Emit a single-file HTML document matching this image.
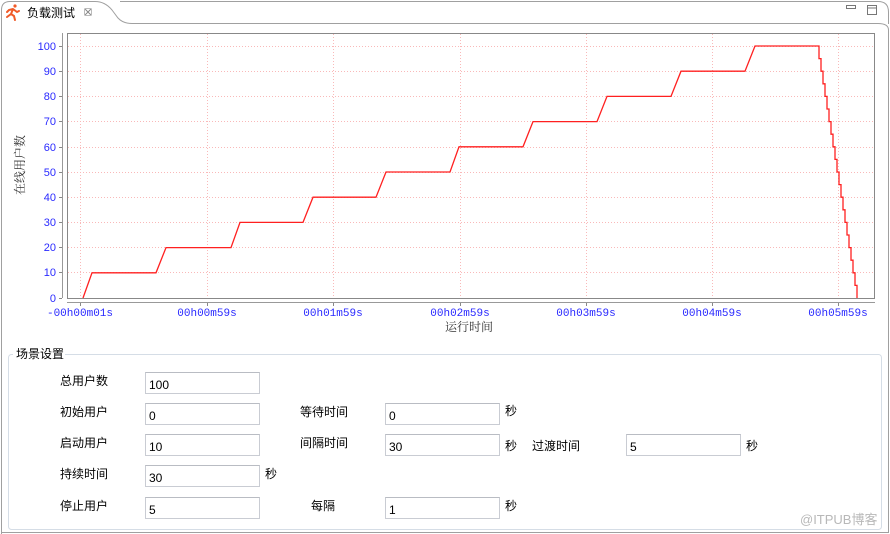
<!DOCTYPE html>
<html><head><meta charset="utf-8">
<style>
*{margin:0;padding:0;box-sizing:border-box}
body{width:890px;height:534px;background:#fff;position:relative;overflow:hidden;font-family:"Liberation Sans","Noto Sans CJK SC",sans-serif;font-size:12px;color:#000}
.abs{position:absolute}
.lbl{position:absolute;font-size:12px;line-height:14px}
.inp{position:absolute;width:115px;height:22px;border:1px solid #c9ccd3;border-top-color:#b9bcc3;background:#fff;font-size:12px;padding:5px 0 0 3px;line-height:14px}
</style></head><body>
<svg class="abs" style="left:0;top:0" width="890" height="534">
  <path d="M1.5,534 V10 Q1.5,1.5 10,1.5 H95 Q105,1.5 112,10 L118,18 Q123,23.5 132,23.5 H878 Q888.5,23.5 888.5,30 V532.5 H1.5" fill="none" stroke="#a0a0a0"/>
  <path d="M120,1.5 H878 Q888.5,1.5 888.5,12 V24" fill="none" stroke="#a0a0a0"/>
  <rect x="846.5" y="5.5" width="9" height="3" fill="#fff" stroke="#777"/>
  <rect x="867.5" y="5.5" width="9" height="9" fill="#fff" stroke="#777"/>
  <line x1="868" y1="8" x2="876" y2="8" stroke="#777"/>
  <g stroke="#f05a28" stroke-width="2" fill="none" stroke-linecap="round">
    <circle cx="15" cy="6" r="1.6" fill="#f05a28" stroke="none"/>
    <path d="M13,9 L11,14 L7,17 M11,14 L14,16 L15,20 M13,9 L17,12 L19,11 M13,9 L9,10 L7,12"/>
  </g>
  <g stroke="#888" stroke-width="1" fill="none">
    <path d="M85,9 L91,15 M91,9 L85,15"/>
    <rect x="84.5" y="8.5" width="7" height="7" rx="1" stroke="#bbb"/>
  </g>
  <line x1="62.5" y1="33" x2="62.5" y2="298" stroke="#999"/>
  <rect x="67.5" y="33.5" width="807" height="265" fill="#fff" stroke="#888"/>
  <line x1="67" y1="302.5" x2="875" y2="302.5" stroke="#999"/>
  <g stroke="#f9b9b9" stroke-width="1" stroke-dasharray="1,2">
    <line x1="68" y1="46.5" x2="874" y2="46.5"/><line x1="68" y1="71.5" x2="874" y2="71.5"/>
    <line x1="68" y1="96.5" x2="874" y2="96.5"/><line x1="68" y1="121.5" x2="874" y2="121.5"/>
    <line x1="68" y1="147.5" x2="874" y2="147.5"/><line x1="68" y1="172.5" x2="874" y2="172.5"/>
    <line x1="68" y1="197.5" x2="874" y2="197.5"/><line x1="68" y1="222.5" x2="874" y2="222.5"/>
    <line x1="68" y1="247.5" x2="874" y2="247.5"/><line x1="68" y1="272.5" x2="874" y2="272.5"/>
    <line x1="80.5" y1="34" x2="80.5" y2="298"/><line x1="207.5" y1="34" x2="207.5" y2="298"/>
    <line x1="333.5" y1="34" x2="333.5" y2="298"/><line x1="460.5" y1="34" x2="460.5" y2="298"/>
    <line x1="586.5" y1="34" x2="586.5" y2="298"/><line x1="712.5" y1="34" x2="712.5" y2="298"/>
    <line x1="838.5" y1="34" x2="838.5" y2="298"/>
  </g>
  <g stroke="#888">
    <line x1="59" y1="46.5" x2="62" y2="46.5"/><line x1="59" y1="71.5" x2="62" y2="71.5"/><line x1="59" y1="96.5" x2="62" y2="96.5"/>
    <line x1="59" y1="121.5" x2="62" y2="121.5"/><line x1="59" y1="147.5" x2="62" y2="147.5"/><line x1="59" y1="172.5" x2="62" y2="172.5"/>
    <line x1="59" y1="197.5" x2="62" y2="197.5"/><line x1="59" y1="222.5" x2="62" y2="222.5"/><line x1="59" y1="247.5" x2="62" y2="247.5"/>
    <line x1="59" y1="272.5" x2="62" y2="272.5"/><line x1="59" y1="298.5" x2="62" y2="298.5"/>
    <line x1="80.5" y1="303" x2="80.5" y2="306"/><line x1="207.5" y1="303" x2="207.5" y2="306"/><line x1="333.5" y1="303" x2="333.5" y2="306"/>
    <line x1="460.5" y1="303" x2="460.5" y2="306"/><line x1="586.5" y1="303" x2="586.5" y2="306"/><line x1="712.5" y1="303" x2="712.5" y2="306"/>
    <line x1="838.5" y1="303" x2="838.5" y2="306"/>
  </g>
  <g font-family="Liberation Sans,sans-serif" font-size="11" fill="#2a2aff" text-anchor="end">
    <text x="56" y="50">100</text><text x="56" y="75">90</text><text x="56" y="100">80</text><text x="56" y="125">70</text>
    <text x="56" y="151">60</text><text x="56" y="176">50</text><text x="56" y="201">40</text><text x="56" y="226">30</text>
    <text x="56" y="251">20</text><text x="56" y="276">10</text><text x="56" y="302">0</text>
  </g>
  <g font-family="Liberation Mono,monospace" font-size="11" fill="#2a2aff" text-anchor="middle">
    <text x="80" y="316">-00h00m01s</text><text x="207" y="316">00h00m59s</text><text x="333" y="316">00h01m59s</text>
    <text x="460" y="316">00h02m59s</text><text x="586" y="316">00h03m59s</text><text x="712" y="316">00h04m59s</text>
    <text x="838" y="316">00h05m59s</text>
  </g>
  <text x="469" y="331" font-size="12" font-family="Noto Serif CJK SC,serif" fill="#333" text-anchor="middle">运行时间</text>
  <text transform="translate(24,165) rotate(-90)" font-size="12" font-family="Noto Serif CJK SC,serif" fill="#333" text-anchor="middle">在线用户数</text>
  <path d="M83,298 L92,272.8 H156 L166,247.6 H231 L240,222.4 H303 L313,197.2 H376 L386,172 H450 L459,146.8 H523 L533,121.6 H597 L607,96.4 H671 L681,71.2 H745 L755,46 H819 V58.6 H821 V71.2 H823 V83.8 H825 V96.4 H827 V109 H829 V121.6 H831 V134.2 H833 V146.8 H835 V159.4 H837 V172 H839 V184.6 H841 V197.2 H843 V209.8 H845 V222.4 H847 V235 H849 V247.6 H851 V260.2 H853 V272.8 H855 V285.4 H857 V298" fill="none" stroke="#ff2020" stroke-width="1.3"/>
  <rect x="8.5" y="354.5" width="873" height="175" rx="3" fill="none" stroke="#d5dde6"/>
  <rect x="13" y="348" width="52" height="12" fill="#fff"/>
</svg>
<div class="lbl" style="left:27px;top:6px;font-size:12px">负载测试</div>
<div class="lbl" style="left:16px;top:347px">场景设置</div>

<div class="lbl" style="left:60px;top:374px">总用户数</div>
<div class="inp" style="left:145px;top:372px">100</div>

<div class="lbl" style="left:60px;top:405px">初始用户</div>
<div class="inp" style="left:145px;top:403px">0</div>
<div class="lbl" style="left:300px;top:405px">等待时间</div>
<div class="inp" style="left:385px;top:403px">0</div>
<div class="lbl" style="left:505px;top:404px">秒</div>

<div class="lbl" style="left:60px;top:436px">启动用户</div>
<div class="inp" style="left:145px;top:434px">10</div>
<div class="lbl" style="left:300px;top:436px">间隔时间</div>
<div class="inp" style="left:385px;top:434px">30</div>
<div class="lbl" style="left:505px;top:439px">秒</div>
<div class="lbl" style="left:532px;top:439px">过渡时间</div>
<div class="inp" style="left:626px;top:434px">5</div>
<div class="lbl" style="left:746px;top:439px">秒</div>

<div class="lbl" style="left:60px;top:467px">持续时间</div>
<div class="inp" style="left:145px;top:465px">30</div>
<div class="lbl" style="left:265px;top:467px">秒</div>

<div class="lbl" style="left:60px;top:499px">停止用户</div>
<div class="inp" style="left:145px;top:497px">5</div>
<div class="lbl" style="left:311px;top:499px">每隔</div>
<div class="inp" style="left:385px;top:497px">1</div>
<div class="lbl" style="left:505px;top:499px">秒</div>

<div class="lbl" style="left:800px;top:513px;color:#b8b8b8;font-size:13px">@ITPUB博客</div>
</body></html>
